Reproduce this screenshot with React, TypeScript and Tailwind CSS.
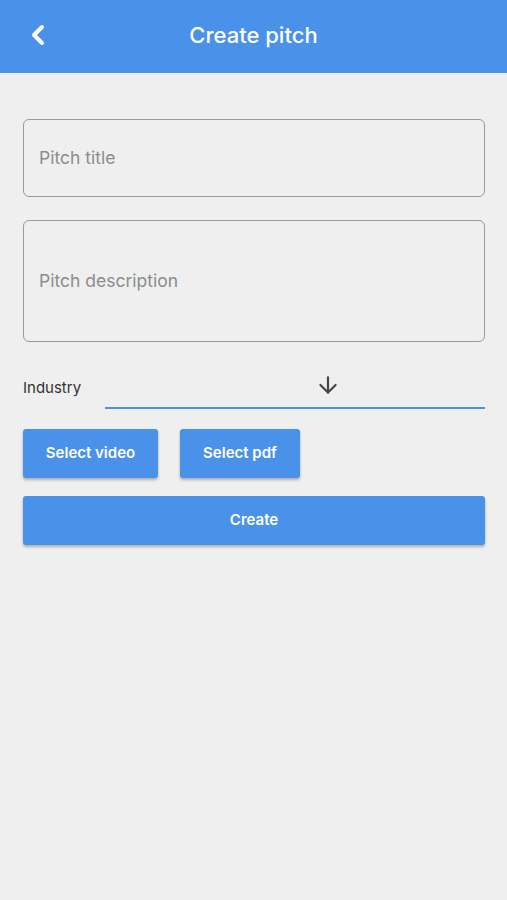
import { ArrowDown, ChevronLeft } from "lucide-react";

const font = { fontFamily: "Inter, 'Noto Sans', sans-serif" };

function ActionButton({ label, className }: { label: string; className: string }) {
  return (
    <button
      className={`flex h-[49px] items-center justify-center rounded-[3px] bg-[#4a91e9] text-[15px] font-semibold text-white shadow-[0_2px_3px_rgba(0,0,0,0.28)] ${className}`}
    >
      {label}
    </button>
  );
}

export default function App() {
  return (
    <div className="min-h-[900px] bg-[#efefef]" style={font}>
      <header className="relative flex h-[73px] items-center justify-center bg-[#4a92e9] pb-[2px]">
        <ChevronLeft className="absolute left-[22px] top-[19px] h-8 w-8 text-white" strokeWidth={3} />
        <h1 className="text-[22px] font-medium text-white">Create pitch</h1>
      </header>

      <main className="flex flex-col pl-[23px] pr-[22px] pt-[46px]">
        <div className="flex h-[78px] items-center rounded-[6px] border-[1.5px] border-[#999] pl-[15px]">
          <span className="text-[17.5px] text-[#8c8c8c]">Pitch title</span>
        </div>

        <div className="mt-[23px] flex h-[122px] items-center rounded-[6px] border-[1.5px] border-[#999] pl-[15px]">
          <span className="text-[17.5px] text-[#8c8c8c]">Pitch description</span>
        </div>

        <div className="mt-[23px] flex items-end">
          <span className="w-[82px] pb-[10px] text-[15px] text-[#333]">Industry</span>
          <div className="flex h-[44px] flex-1 items-center border-b-2 border-[#4a91e9] pb-[2px] pl-[210px]">
            <ArrowDown className="h-[26px] w-[26px] text-[#444]" strokeWidth={2} />
          </div>
        </div>

        <div className="mt-[20px] flex gap-[22px]">
          <ActionButton label="Select video" className="w-[135px]" />
          <ActionButton label="Select pdf" className="w-[120px]" />
        </div>

        <ActionButton label="Create" className="mt-[18px] w-full" />
      </main>
    </div>
  );
}
